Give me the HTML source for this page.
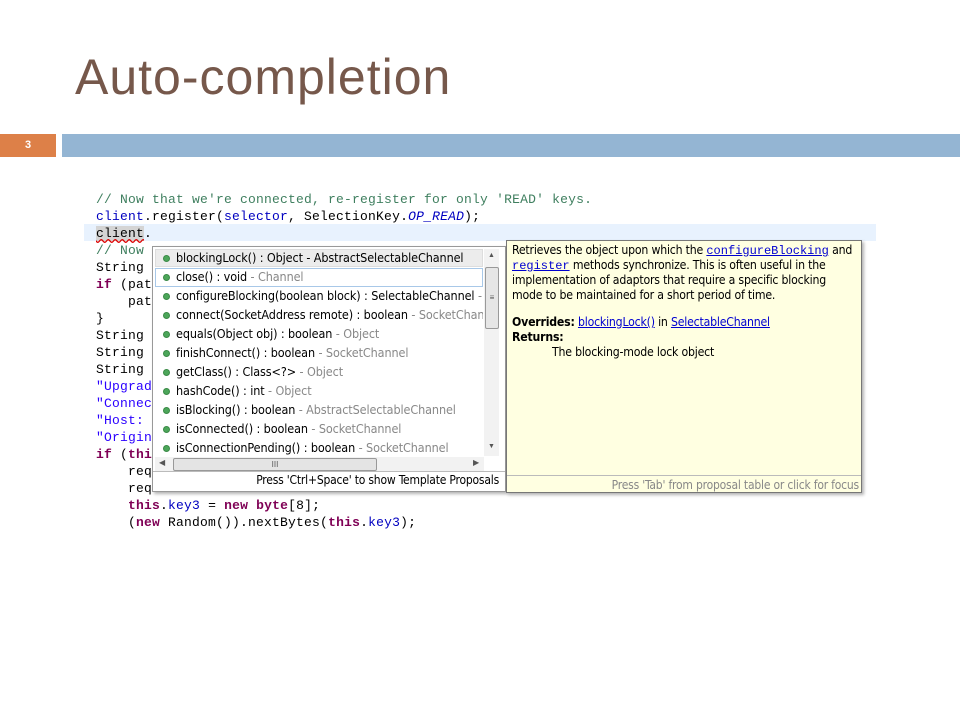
<!DOCTYPE html>
<html><head><style>
body{margin:0;width:960px;height:720px;background:#fff;position:relative;overflow:hidden;font-family:"Liberation Sans",sans-serif}
.abs{position:absolute}
.title{left:75px;top:48px;font-size:50px;color:#76584b;letter-spacing:1px}
.code{left:96px;top:191px;font-family:"Liberation Mono",monospace;font-size:13px;letter-spacing:0.2px;line-height:17px;color:#000;white-space:pre}
.c{color:#3f7f5f}.k{color:#7f0055;font-weight:bold}.f{color:#0000c0}.s{color:#2a00ff}
.list{left:152px;top:246px;width:352px;height:244px;background:#fff;border:1px solid #999;box-shadow:2px 2px 3px rgba(0,0,0,.3)}
.it{position:absolute;left:6px;width:324px;height:18px;font-size:12.5px;line-height:18px;color:#000;white-space:nowrap;overflow:hidden;font-family:"DejaVu Sans Condensed","Liberation Sans",sans-serif;letter-spacing:-0.1px}
.it i{display:inline-block;width:7px;height:7px;border-radius:50%;background:#4ca65a;margin:0 6px 0 4px;vertical-align:0px;border:1px solid #3a8a46;box-sizing:border-box}
.it span{color:#888}
.doc{left:506px;top:240px;width:354px;height:251px;background:#ffffe1;border:1px solid #777;box-shadow:2px 2px 3px rgba(0,0,0,.3);font-size:12.2px;line-height:15px;font-family:"DejaVu Sans Condensed","Liberation Sans",sans-serif;letter-spacing:-0.2px}
a{color:#0000d0;text-decoration:underline}
.m{font-family:"Liberation Mono",monospace;font-size:12px;letter-spacing:0;line-height:14px}
</style></head><body>
<div class="abs title">Auto-completion</div>
<div class="abs" style="left:0;top:134px;width:56px;height:23px;background:#dd8048;color:#fff;font-size:11px;font-weight:bold;line-height:23px;text-align:center">3</div>
<div class="abs" style="left:62px;top:134px;width:898px;height:23px;background:#94b5d3"></div>
<div class="abs" style="left:84px;top:224px;width:792px;height:17px;background:#e8f2fe"></div>
<div class="abs code"><span class="c">// Now that we're connected, re-register for only 'READ' keys.</span>
<span class="f">client</span>.register(<span class="f">selector</span>, SelectionKey.<i class="f">OP_READ</i>);
<span style="background:#d4d4d4;text-decoration:underline wavy #d00">client</span>.
<span class="c">// Now</span>
String
<span class="k">if</span> (pat
    pat
}
String
String
String
<span class="s">"Upgrad</span>
<span class="s">"Connec</span>
<span class="s">"Host: </span>
<span class="s">"Origin</span>
<span class="k">if</span> (<span class="k">thi</span>
    req
    req
    <span class="k">this</span>.<span class="f">key3</span> = <span class="k">new</span> <span class="k">byte</span>[8];
    (<span class="k">new</span> Random()).nextBytes(<span class="k">this</span>.<span class="f">key3</span>);</div>
<div class="abs list">
<div class="abs" style="left:2px;top:2px;width:328px;height:18px;background:#ececec;border:1px solid #ddd;box-sizing:border-box"></div>
<div class="abs" style="left:2px;top:21px;width:328px;height:19px;border:1px solid #a8c8e8;box-sizing:border-box"></div>
<div class="it" style="top:2px"><i></i>blockingLock() : Object - AbstractSelectableChannel</div>
<div class="it" style="top:21px"><i></i>close() : void <span>- Channel</span></div>
<div class="it" style="top:40px"><i></i>configureBlocking(boolean block) : SelectableChannel <span>- AbstractSelectableChannel</span></div>
<div class="it" style="top:59px"><i></i>connect(SocketAddress remote) : boolean <span>- SocketChannel</span></div>
<div class="it" style="top:78px"><i></i>equals(Object obj) : boolean <span>- Object</span></div>
<div class="it" style="top:97px"><i></i>finishConnect() : boolean <span>- SocketChannel</span></div>
<div class="it" style="top:116px"><i></i>getClass() : Class&lt;?&gt; <span>- Object</span></div>
<div class="it" style="top:135px"><i></i>hashCode() : int <span>- Object</span></div>
<div class="it" style="top:154px"><i></i>isBlocking() : boolean <span>- AbstractSelectableChannel</span></div>
<div class="it" style="top:173px"><i></i>isConnected() : boolean <span>- SocketChannel</span></div>
<div class="it" style="top:192px"><i></i>isConnectionPending() : boolean <span>- SocketChannel</span></div>
<div class="abs" style="left:331px;top:2px;width:15px;height:207px;background:#f2f2f2"></div>
<div class="abs" style="left:332px;top:20px;width:12px;height:60px;background:#e6e6e6;border:1px solid #999;border-radius:2px;font-size:8px;text-align:center;line-height:60px;color:#555">≡</div>
<div class="abs" style="left:335px;top:5px;font-size:7px;color:#555">▲</div>
<div class="abs" style="left:335px;top:196px;font-size:7px;color:#555">▼</div>
<div class="abs" style="left:2px;top:210px;width:329px;height:14px;background:#f2f2f2"></div>
<div class="abs" style="left:20px;top:211px;width:202px;height:11px;background:#e4e4e4;border:1px solid #999;border-radius:2px;font-size:8px;text-align:center;line-height:11px;color:#555">III</div>
<div class="abs" style="left:6px;top:211px;font-size:8px;color:#555">◀</div>
<div class="abs" style="left:320px;top:211px;font-size:8px;color:#555">▶</div>
<div class="abs" style="left:0;top:224px;width:352px;height:1px;background:#bbb"></div>
<div class="abs" style="right:6px;top:226px;font-size:12px;font-family:'DejaVu Sans Condensed','Liberation Sans',sans-serif;letter-spacing:-0.2px">Press 'Ctrl+Space' to show Template Proposals</div>
</div>
<div class="abs doc">
<div style="padding:2px 4px 0 5px">Retrieves the object upon which the <a class="m">configureBlocking</a> and <a class="m">register</a> methods synchronize. This is often useful in the implementation of adaptors that require a specific blocking mode to be maintained for a short period of time.
<div style="height:12px"></div>
<b>Overrides:</b> <a>blockingLock()</a> in <a>SelectableChannel</a><br><b>Returns:</b><br><span style="padding-left:40px">The blocking-mode lock object</span></div>
<div class="abs" style="left:0;top:234px;width:354px;height:1px;background:#bbb"></div>
<div class="abs" style="right:2px;top:237px;color:#888;font-size:12px">Press 'Tab' from proposal table or click for focus</div>
</div>
</body></html>
